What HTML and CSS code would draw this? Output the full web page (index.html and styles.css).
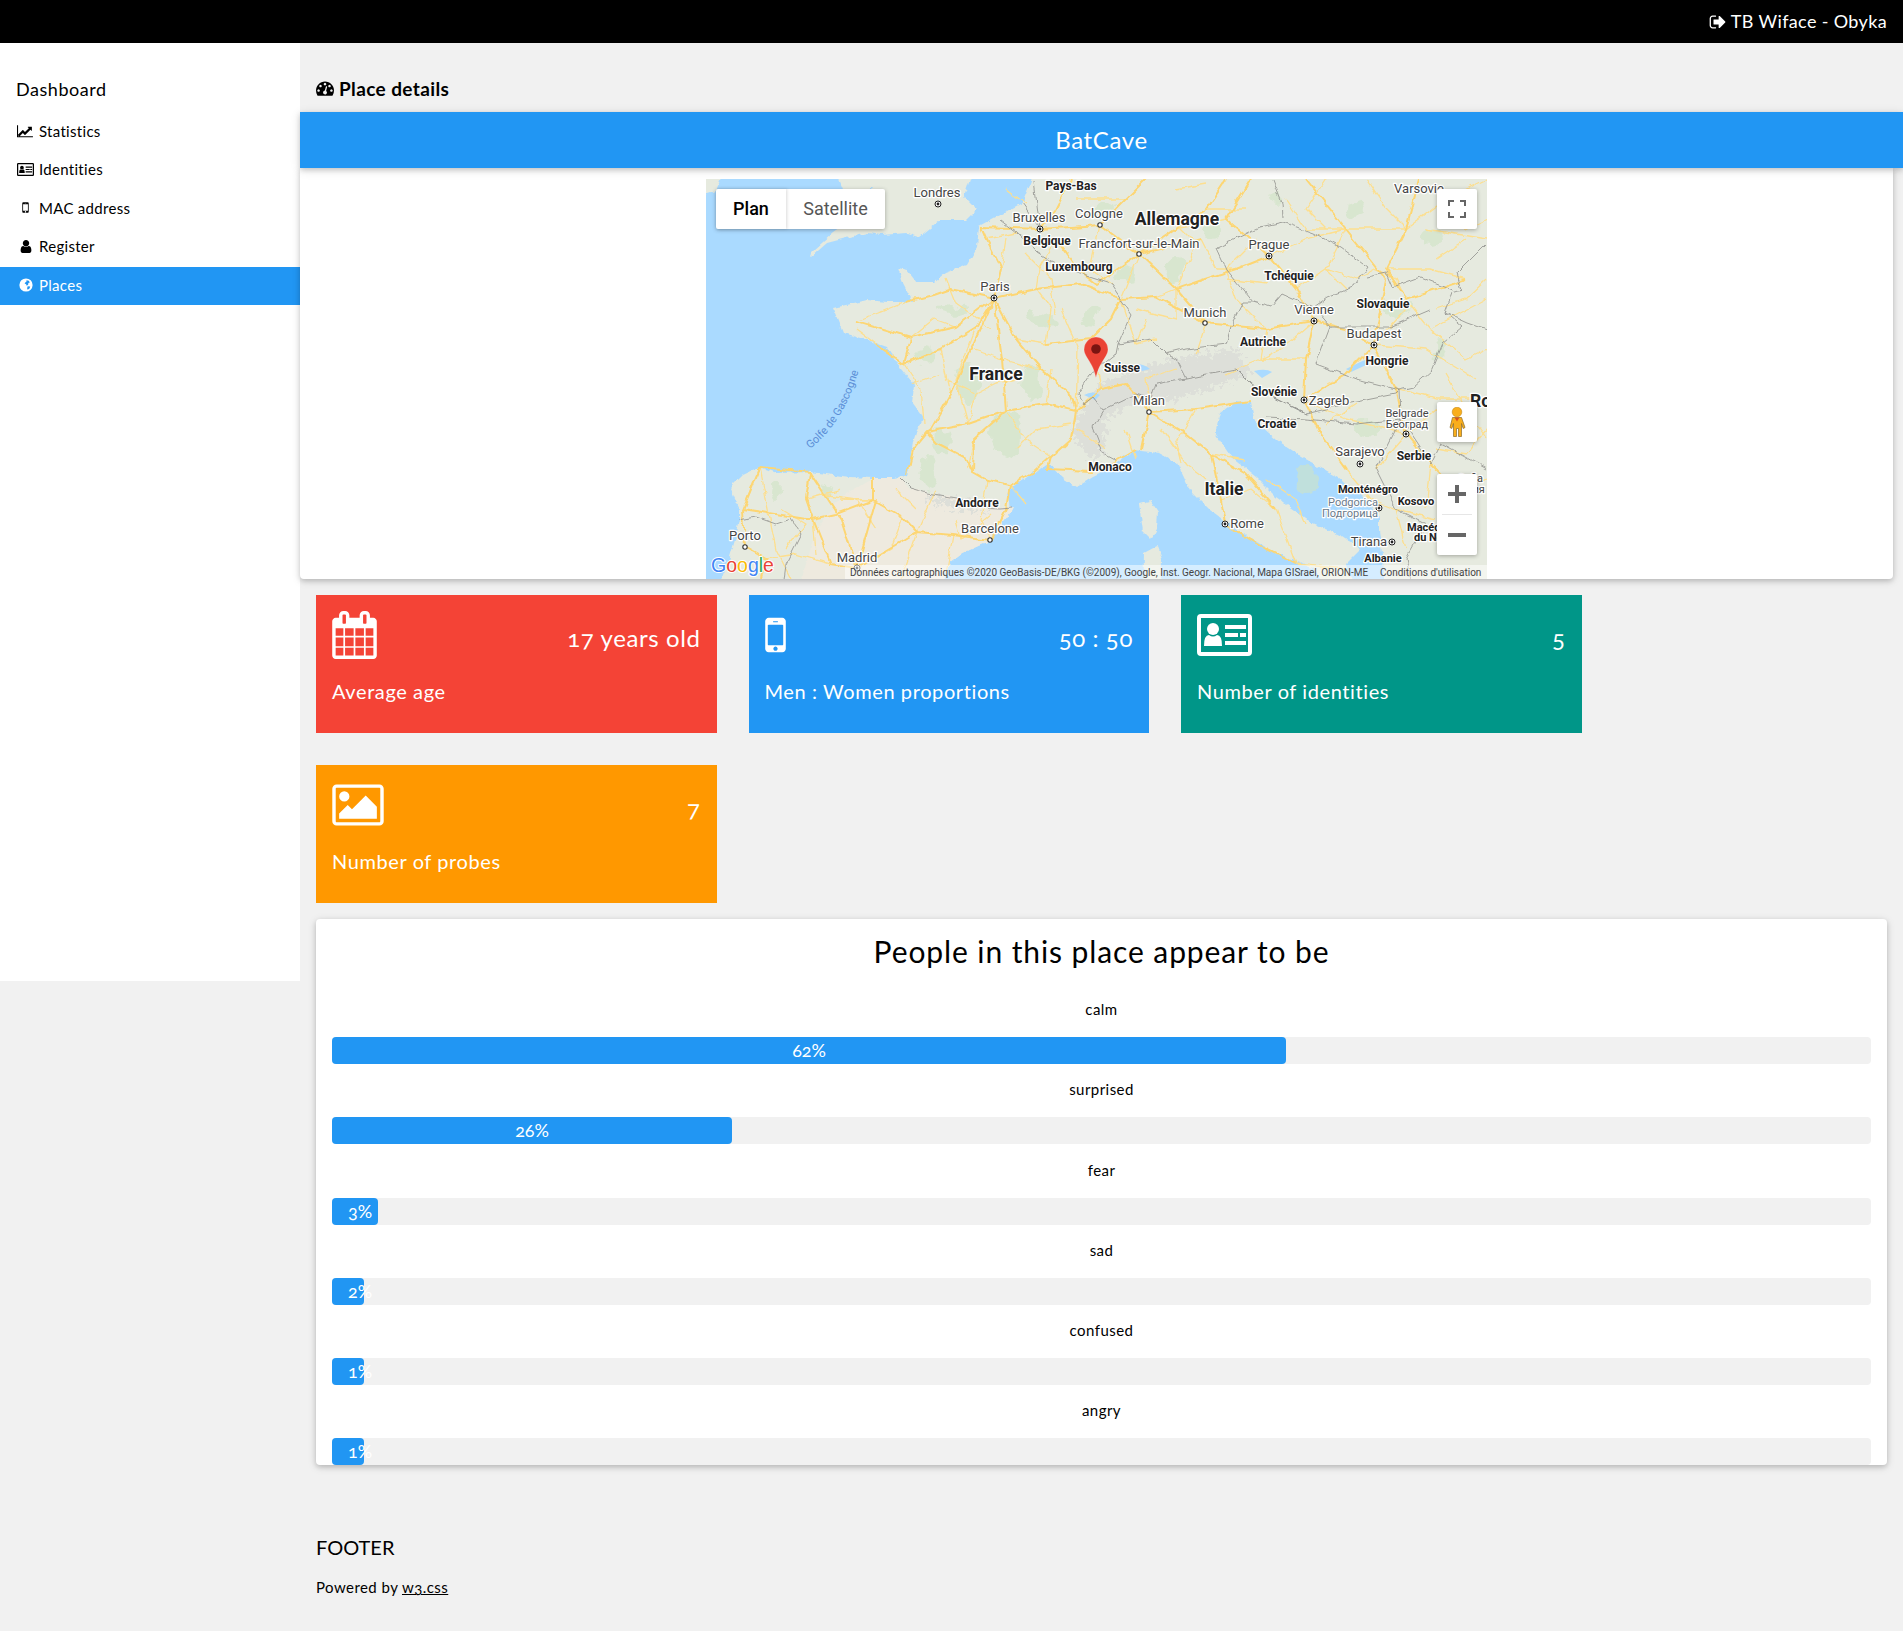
FILE: index.html
```html
<!DOCTYPE html>
<html lang="en">
<head>
<meta charset="utf-8">
<title>Place details</title>
<link rel="stylesheet" href="styles.css">
</head>
<body>
<header class="topbar">
  <svg class="ico-signout" viewBox="0 0 1792 1792"><path d="M704 1440q0 4 1 20t.5 26.5-3 23.5-10 19.5-20.5 6.5h-320q-119 0-203.5-84.5t-84.5-203.5v-704q0-119 84.5-203.5t203.5-84.5h320q13 0 22.5 9.5t9.5 22.5q0 4 1 20t.5 26.5-3 23.5-10 19.5-20.5 6.5h-320q-66 0-113 47t-47 113v704q0 66 47 113t113 47h312l11.5 1 11.5 3 8 5.5 7 9 2 13.5zm928-544q0 26-19 45l-544 544q-19 19-45 19t-45-19-19-45v-288h-448q-26 0-45-19t-19-45v-384q0-26 19-45t45-19h448v-288q0-26 19-45t45-19 45 19l544 544q19 19 19 45z"/></svg>
  <span class="topbar-text">TB Wiface - Obyka</span>
</header>
<div class="layout">
  <nav class="sidebar">
    <div class="side-title">Dashboard</div>
    <a class="side-item"><span class="side-ico"><svg width="17" height="15" viewBox="0 0 2048 1792"><path d="M1920 1472v128h-1920v-1472h128v1344h1792zm-128-1120v435q0 21-19.5 29.5t-35.5-7.5l-121-121-633 633q-10 10-23 10t-23-10l-233-233-416 416-192-192 585-585q10-10 23-10t23 10l233 233 464-464-121-121q-16-16-7.5-35.5t29.5-19.5h435q14 0 23 9t9 23z"/></svg></span>Statistics</a>
    <a class="side-item"><span class="side-ico"><svg width="17" height="15" viewBox="0 0 55 48"><path fill-rule="evenodd" d="M4 3h47a4 4 0 0 1 4 4v34a4 4 0 0 1-4 4H4a4 4 0 0 1-4-4V7a4 4 0 0 1 4-4zm0 4v34h47V7z"/><circle cx="16" cy="18" r="6"/><path d="M7 35q0-11 5-11 4 3 8 0 5 0 5 11z"/><path d="M28 14h21v4H28zM28 22h13v4H28zM43 22h6v4h-6zM28 30h21v4H28z"/></svg></span>Identities</a>
    <a class="side-item"><span class="side-ico"><svg width="7" height="15" viewBox="512 0 768 1792"><path d="M976 1408q0-33-23.5-56.5t-56.5-23.5-56.5 23.5-23.5 56.5 23.5 56.5 56.5 23.5 56.5-23.5 23.5-56.5zm208-160v-704q0-13-9.5-22.5t-22.5-9.5h-512q-13 0-22.5 9.5t-9.5 22.5v704q0 13 9.5 22.5t22.5 9.5h512q13 0 22.5-9.5t9.5-22.5zm-192-848q0-16-16-16h-160q-16 0-16 16t16 16h160q16 0 16-16zm288-16v1024q0 52-38 90t-90 38h-512q-52 0-90-38t-38-90v-1024q0-52 38-90t90-38h512q52 0 90 38t38 90z"/></svg></span>MAC address</a>
    <a class="side-item"><span class="side-ico"><svg width="12" height="15" viewBox="256 0 1280 1792"><path d="M1536 1399q0 109-62.5 187t-150.5 78h-854q-88 0-150.5-78t-62.5-187q0-85 8.5-160.5t31.5-152 58.5-131 94-89 134.5-34.5q131 128 313 128t313-128q76 0 134.5 34.5t94 89 58.5 131 31.5 152 8.5 160.5zm-256-887q0 159-112.5 271.5t-271.5 112.5-271.5-112.5-112.5-271.5 112.5-271.5 271.5-112.5 271.5 112.5 112.5 271.5z"/></svg></span>Register</a>
    <a class="side-item side-active"><span class="side-ico"><svg width="14" height="14" viewBox="0 0 14 14"><circle cx="7" cy="7" r="6.6" fill="#fff"/><path fill="#2196F3" d="M7.5 2.2l2.3.6 1 1.6-1.4.7-.3 1.700-1.400.9-.6-1.400-1.500-.9.9-1.100.9-.6zM8.700 8.200l2.500.4-.7 2-1.900 1.200-.5-1.600z"/></svg></span>Places</a>
  </nav>
  <main class="content">
    <h1 class="page-title"><svg class="ico-dash" viewBox="0 0 1792 1792"><path d="M384 1152q0-53-37.5-90.5t-90.5-37.5-90.5 37.5-37.5 90.5 37.5 90.5 90.5 37.5 90.5-37.5 37.5-90.5zm192-448q0-53-37.5-90.5t-90.5-37.5-90.5 37.5-37.5 90.5 37.5 90.5 90.5 37.5 90.5-37.5 37.5-90.5zm428 481l101-382q6-26-7.5-48.5t-38.5-29.5-48 6.5-30 39.5l-101 382q-60 5-107 43.5t-63 98.5q-20 77 20 146t117 89 146-20 89-117q16-60-6-117t-72-91zm660-33q0-53-37.5-90.5t-90.5-37.5-90.5 37.5-37.5 90.5 37.5 90.5 90.5 37.5 90.5-37.5 37.5-90.5zm-640-640q0-53-37.5-90.5t-90.5-37.5-90.5 37.5-37.5 90.5 37.5 90.5 90.5 37.5 90.5-37.5 37.5-90.5zm448 192q0-53-37.5-90.5t-90.5-37.5-90.5 37.5-37.5 90.5 37.5 90.5 90.5 37.5 90.5-37.5 37.5-90.5zm320 448q0 261-141 483-19 29-54 29h-1402q-35 0-54-29-141-221-141-483 0-182 71-348t191-286 286-191 348-71 348 71 286 191 191 286 71 348z"/></svg>Place details</h1>
    <div class="place-bar">BatCave</div>
    <section class="map-card">
      <div class="map">
        <svg class="map-svg" viewBox="0 0 781 400" width="781" height="400">
          <defs>
            <filter id="wig" filterUnits="userSpaceOnUse" x="-30" y="-30" width="841" height="460">
              <feTurbulence type="fractalNoise" baseFrequency=".09" numOctaves="2" seed="4" result="n"/>
              <feDisplacementMap in="SourceGraphic" in2="n" scale="6" xChannelSelector="R" yChannelSelector="G"/>
            </filter>
            <filter id="coast" filterUnits="userSpaceOnUse" x="-30" y="-30" width="841" height="460">
              <feTurbulence type="fractalNoise" baseFrequency=".14" numOctaves="3" seed="9" result="n"/>
              <feDisplacementMap in="SourceGraphic" in2="n" scale="5" xChannelSelector="R" yChannelSelector="G"/>
            </filter>
            <filter id="blob" filterUnits="userSpaceOnUse" x="-30" y="-30" width="841" height="460">
              <feTurbulence type="fractalNoise" baseFrequency=".07" numOctaves="3" seed="2" result="n"/>
              <feDisplacementMap in="SourceGraphic" in2="n" scale="18" xChannelSelector="R" yChannelSelector="G"/>
              <feGaussianBlur stdDeviation=".6"/>
            </filter>
            <filter id="rock" filterUnits="userSpaceOnUse" x="-30" y="-30" width="841" height="460">
              <feTurbulence type="fractalNoise" baseFrequency=".22" numOctaves="3" seed="7" result="n"/>
              <feDisplacementMap in="SourceGraphic" in2="n" scale="22" xChannelSelector="R" yChannelSelector="G"/>
              <feGaussianBlur stdDeviation=".5"/>
            </filter>
            <g id="cd"><circle r="3" fill="#fff" stroke="#222" stroke-width="1"/><circle r="1.400" fill="#222"/></g>
            <path id="gascogne" d="M104 270Q134 246 148 206T152 180"/>
          </defs>
          <rect width="781" height="400" fill="#aadaff"/>
          <!-- land -->
          <g filter="url(#coast)">
            <path class="land" d="M-20 -20L22 -20L10 12L-20 22ZM124 -20L137 11L150 18L167 8L161 31L127 54L106 73L105 78L121 64L144 58L161 54L176 56L201 54L213 58L234 41L261 41L271 31L258 18L271 -20Z"/>
            <path class="land" d="M334 -20L316 25L273 48L271 68L261 86L239 94L227 104L211 104L201 91L192 89L197 104L207 123L181 123L161 121L141 126L127 129L131 139L137 154L161 161L181 168L191 184L207 204L208 208L206 224L218 240L211 250L207 262L204 288L201 296L181 301L167 299L144 298L104 293L71 294L54 288L37 296L24 309L34 331L34 341L31 354L24 378L10 420L228 420L244 384L257 374L281 363L290 352L304 334L302 311L317 301L341 284L357 299L371 308L387 298L402 291L428 271L453 274L471 284L484 311L504 331L535 354L570 374L606 388L628 420L652 420L640 385L655 370L637 358L606 344L570 318L550 298L525 278L509 254L514 234L530 222L545 224L548 241L571 261L596 278L632 298L657 318L673 338L673 352L678 391L678 420L810 420L810 -20Z"/>
            <path class="land-es" d="M194 299L204 309L221 314L251 319L271 328L294 329L307 328L304 334L290 352L281 363L257 374L244 384L228 420L90 420L110 350L135 318L167 299Z"/>
            <path class="land" d="M433 325L445 322L452 333L451 350L445 360L437 352ZM438 374L451 367L456 380L455 420L437 420Z"/>
          </g>
          <!-- vegetation -->
          <g class="green" filter="url(#blob)">
            <ellipse cx="246" cy="130" rx="14" ry="6"/><ellipse cx="262" cy="205" rx="11" ry="20"/><ellipse cx="300" cy="255" rx="16" ry="24"/><ellipse cx="326" cy="205" rx="9" ry="17"/><ellipse cx="222" cy="295" rx="9" ry="15"/><ellipse cx="236" cy="262" rx="8" ry="16"/>
            <ellipse cx="218" cy="178" rx="10" ry="7"/><ellipse cx="335" cy="140" rx="13" ry="8"/><ellipse cx="384" cy="136" rx="10" ry="9"/><ellipse cx="420" cy="95" rx="12" ry="8"/><ellipse cx="470" cy="90" rx="10" ry="12"/>
            <ellipse cx="505" cy="50" rx="12" ry="8"/><ellipse cx="570" cy="20" rx="10" ry="7"/><ellipse cx="650" cy="30" rx="8" ry="8"/><ellipse cx="690" cy="130" rx="14" ry="6"/><ellipse cx="725" cy="60" rx="11" ry="6"/><ellipse cx="735" cy="170" rx="6" ry="8"/><ellipse cx="400" cy="30" rx="12" ry="8"/>
            <ellipse cx="120" cy="310" rx="8" ry="4"/><ellipse cx="70" cy="312" rx="5" ry="8"/><ellipse cx="600" cy="300" rx="12" ry="14"/><ellipse cx="660" cy="250" rx="14" ry="9"/>
          </g>
          <g filter="url(#rock)">
            <path class="alps" d="M375 230L395 205L430 190L480 178L530 170L545 195L510 208L465 222L425 225L400 240L398 275L385 280L365 255Z"/>
            <path class="alps" d="M221 316L262 322L282 334L252 330L228 326Z"/>
          </g>
          <path class="water" d="M548 192q12-3 18 1l-10 6zM430 185q8 0 14 5l-8 2zM378 216q9-5 16 0l-5 5zM640 190q18-9 26-12l-6 8-15 7z"/>
          <!-- roads -->
          <g filter="url(#wig)">
          <path class="road-thin" d="M150 142L175 133L200 123M205 158L228 140L250 148M198 185L215 210L218 245M170 165L150 150M235 170L245 215M262 245L250 200L270 148M296 180L330 190L335 190M310 160L340 165M340 165L345 130L330 110M265 170L296 180M268 260L262 290M300 232L320 262L345 278M340 225L345 190M371 250L400 270M395 210L385 160M350 60L333 90L330 110M300 60L295 90M280 60L311 54M394 46L384 90L405 105M433 75L415 120M470 110L450 118M495 60L510 90L530 90M470 50L520 40L563 77M500 30L540 30M590 110L620 90L650 100L668 90L690 100L700 120M640 50L620 90M580 20L600 50L640 50L700 50M680 90L724 90L760 100M700 120L724 150L760 180L781 170M724 150L781 120M700 50L740 20L781 0M720 50L781 60M668 166L700 130M668 166L720 170L770 200M690 210L730 220L781 220M700 255L730 230L770 240M750 310L781 300M640 290L665 320L690 330L700 370M690 330L730 340M725 285L720 330M670 290L700 255M560 150L555 180L520 195M608 142L575 170L555 180M555 180L600 180M640 195L620 205M598 221L640 240L700 255M490 230L470 265L475 285M505 275L540 280M515 320L545 310L570 330M570 330L590 385M445 232L440 200L470 190M415 120L430 165M500 144L490 175M520 100L560 105M563 77L600 60L640 50M167 321L135 320M197 338L185 370L151 389M247 356L240 395M211 353L230 310M125 385L90 375L60 380M60 320L70 370L85 400M107 340L110 375M211 353L195 400M281 301L275 340L285 361M304 306L320 325M100 320L135 310M54 288L60 320M590 385L640 390M240 100L250 125L285 150M320 75L345 100L350 135M355 130L372 170L370 232M240 200L270 215L262 245M205 205L235 195M310 200L290 205L270 215M310 270L330 250L365 245M430 130L470 140L470 110M460 35L490 65L470 110M530 120L520 90L550 60M530 120L560 150M620 50L600 30L620 0M660 0L680 30L700 50M740 20L760 50L781 40M730 80L760 60M730 130L760 120L781 100M640 110L620 90M740 195L760 230L781 260M730 270L760 275L781 250M620 245L650 225M560 300L590 320L600 345M420 250L430 280M455 250L480 285L500 300M370 20L395 20L420 20M300 10L320 25M470 10L500 5M440 140L430 165L450 160M170 350L150 320L115 315M75 330L100 345L80 370M190 310L210 330M250 340L255 360L285 335"/>
          <path class="road" d="M288 119L245 110L228 116L200 123M288 119L250 148L205 158L150 142M205 158L198 185L170 165M198 185L235 170L270 148L288 119M288 119L295 90L280 60L275 48M288 119L330 110L375 105L415 120M288 119L310 160L335 190L365 215L370 232M288 119L265 170L245 215L225 250L221 253M221 253L231 264L260 279L267 293L281 301L304 306L327 293L344 278M370 232L365 260L345 278L342 290M221 253L207 270L201 296M221 253L262 245L300 232L340 225L370 232M267 293L268 260L300 232L296 180L288 119M342 290L385 292L405 285L430 270M370 232L395 210L420 205L445 232M340 165L385 160L405 140L415 120M275 48L334 50L350 30L365 0M334 50L394 46L433 75L495 60M373 92L350 60M373 92L390 105L433 75M433 75L470 110L499 144M415 120L450 118L499 144L560 150L608 142M394 46L420 20L440 0M433 75L470 50L500 30L520 0M563 77L530 90L499 100L470 110M563 77L520 40L545 0M563 77L590 110L608 142M608 142L640 150L668 166M668 166L640 195L598 221M668 166L690 210L700 255M608 142L600 180L598 221M598 221L615 255L640 290M700 255L725 285L750 310M443 233L490 230L545 222M443 233L480 255L505 275L515 320L519 345M443 233L435 270M519 345L560 370L590 385M505 275L540 295L570 330M713 0L700 50L680 90L700 120L760 100M600 0L640 50L680 100L668 166M151 389L170 321M151 389L135 340L104 293M167 321L197 338L211 353L247 356L285 361M285 361L300 330L304 306M104 293L100 320L107 340L125 385L151 389M104 293L54 288M54 288L37 330L39 368M37 330L100 340L107 340M167 299L167 321L130 335L107 340M39 368L60 380L55 400M211 353L151 389"/>
          <path class="border" d="M194 299L204 309L221 314L251 319L271 328L294 329L307 328M294 41L311 54L331 73L344 81L371 94L405 105L425 135L412 165L410 175L385 195L372 215L378 225L387 218L397 231L387 248L397 274L410 281M412 165L445 160L460 175M397 231L430 215L445 220L450 205L480 200L470 180L460 175L480 170L520 165L526 144L537 123L547 123M511 69L521 91L547 123L564 128L576 114L607 128L621 118L647 108L661 88L634 68L607 54L577 43L554 48L511 69M577 38L576 24L567 1M661 98L681 94L687 108L714 98L747 111M624 148L684 148L724 131M781 64L751 94L756 111L746 114L739 134L756 148L737 164L726 191L707 208L694 211M739 134L761 144L781 151M480 200L530 190L545 205L560 215L600 235L640 225L690 215L694 211M624 148L607 128M624 148L610 185L650 200L694 211M560 238L600 240L650 245L695 240L670 290L690 330M694 211L695 240L725 285L735 265L781 290M690 330L720 345L700 380L705 401M34 341L50 338L70 345L85 340L95 355L80 385L78 401M316 25L334 50L328 2M600 235L560 215"/>
          </g>
          <!-- labels -->
          <use href="#cd" x="232" y="25"/><use href="#cd" x="288" y="119"/><use href="#cd" x="334" y="50"/><use href="#cd" x="563" y="77"/><use href="#cd" x="608" y="142"/><use href="#cd" x="668" y="166"/><use href="#cd" x="598" y="221"/><use href="#cd" x="700" y="255"/><use href="#cd" x="654" y="285"/><use href="#cd" x="519" y="345"/><use href="#cd" x="686" y="363"/><use href="#cd" x="673" y="329"/><use href="#cd" x="151" y="389"/>
          <circle class="odot" cx="394" cy="46" r="2.200"/><circle class="odot" cx="433" cy="75" r="2.200"/><circle class="odot" cx="499" cy="144" r="2.200"/><circle class="odot" cx="443" cy="233" r="2.200"/><circle class="odot" cx="284" cy="361" r="2.200"/><circle class="odot" cx="39" cy="368" r="2.200"/>
          <text class="city" x="231" y="18">Londres</text>
          <text class="ctry" x="365" y="11">Pays-Bas</text>
          <text class="city" x="333" y="43">Bruxelles</text>
          <text class="city" x="393" y="39">Cologne</text>
          <text class="big" x="471" y="46">Allemagne</text>
          <text class="ctry" x="341" y="66">Belgique</text>
          <text class="city" x="433" y="69">Francfort-sur-le-Main</text>
          <text class="city" x="563" y="70">Prague</text>
          <text class="ctry" x="373" y="92">Luxembourg</text>
          <text class="ctry" x="583" y="101">Tchéquie</text>
          <text class="city" x="289" y="112">Paris</text>
          <text class="ctry" x="677" y="129">Slovaquie</text>
          <text class="city" x="499" y="138">Munich</text>
          <text class="city" x="608" y="135">Vienne</text>
          <text class="city" x="668" y="159">Budapest</text>
          <text class="ctry" x="557" y="167">Autriche</text>
          <text class="ctry" x="681" y="186">Hongrie</text>
          <text class="big" x="290" y="201">France</text>
          <text class="ctry" x="416" y="193">Suisse</text>
          <text class="ctry" x="568" y="217">Slovénie</text>
          <text class="city" x="623" y="226">Zagreb</text>
          <text class="city" x="443" y="226">Milan</text>
          <text class="ctry" x="571" y="249">Croatie</text>
          <text class="city city-sm" x="701" y="238">Belgrade</text>
          <text class="city city-sm" x="701" y="249">Београд</text>
          <text class="city" x="654" y="277">Sarajevo</text>
          <text class="ctry" x="708" y="281">Serbie</text>
          <text class="ctry" x="404" y="292">Monaco</text>
          <text class="big" x="518" y="316">Italie</text>
          <text class="ctry ctry-sm" x="662" y="314">Monténégro</text>
          <text class="ctry ctry-sm" x="710" y="326">Kosovo</text>
          <text class="city city-dim" x="647" y="327">Podgorica</text>
          <text class="city city-dim" x="644" y="338">Подгорица</text>
          <text class="ctry" x="271" y="328">Andorre</text>
          <text class="city" x="541" y="349">Rome</text>
          <text class="city" x="284" y="354">Barcelone</text>
          <text class="city" x="663" y="367">Tirana</text>
          <text class="ctry ctry-sm" x="677" y="383">Albanie</text>
          <text class="ctry ctry-sm ctry-start" x="701" y="352">Macédoine</text>
          <text class="ctry ctry-sm ctry-start" x="708" y="362">du Nord</text>
          <text class="city" x="39" y="361">Porto</text>
          <text class="city" x="151" y="383">Madrid</text>
          <text class="city" x="713" y="14">Varsovie</text>
          <text class="big big-start" x="764" y="228">Roumanie</text>
          <text class="city city-sm ctry-start" x="752" y="303">Sofia</text>
          <text class="city city-sm ctry-start" x="745" y="314">София</text>
          <text class="sea"><textPath href="#gascogne">Golfe de Gascogne</textPath></text>
          <!-- marker -->
          <path d="M390 199C387 183 378 178 378 170.500A12 12.500 0 0 1 402 170.500C402 178 393 183 390 199Z" fill="#ea4335" stroke="#fff" stroke-opacity=".35" stroke-width=".8"/>
          <circle cx="390" cy="170" r="4.800" fill="#7a1411"/>
          <!-- attribution -->
          <rect class="attr-bg" x="139" y="386" width="642" height="14"/>
          <text class="attr" x="144" y="397">Données cartographiques ©2020 GeoBasis-DE/BKG (©2009), Google, Inst. Geogr. Nacional, Mapa GISrael, ORION-ME</text>
          <text class="attr" x="674" y="397">Conditions d'utilisation</text>
          <text class="google" x="5" y="393"><tspan class="g-b">G</tspan><tspan class="g-r">o</tspan><tspan class="g-y">o</tspan><tspan class="g-b">g</tspan><tspan class="g-g">l</tspan><tspan class="g-r">e</tspan></text>
        </svg>
        <div class="map-type"><span class="type-btn type-on">Plan</span><span class="type-btn type-off">Satellite</span></div>
        <div class="map-ctl ctl-full"><svg width="18" height="18" viewBox="0 0 18 18"><path d="M1 6V1h5M12 1h5v5M17 12v5h-5M6 17H1v-5" fill="none" stroke="#666" stroke-width="2"/></svg></div>
        <div class="map-ctl ctl-peg"><svg width="18" height="30" viewBox="0 0 18 30"><circle cx="9" cy="5" r="4.800" fill="#f9ae1c" stroke="#c48a1a" stroke-width=".6"/><path d="M4.500 10.500h9l3.500 10-1.800 1-1.700-5V29.500h-3v-8h-2v8h-3V16.500l-1.700 5-1.800-1z" fill="#f9ae1c" stroke="#8a6a2a" stroke-width=".7"/><path d="M6.500 10.500h5L9 14.500z" fill="#d9541e"/></svg></div>
        <div class="map-ctl ctl-zoom">
          <div class="zoom-btn"><svg width="18" height="18" viewBox="0 0 18 18"><path d="M7 0h4v7h7v4h-7v7H7v-7H0V7h7z" fill="#666"/></svg></div>
          <div class="zoom-sep"></div>
          <div class="zoom-btn"><svg width="18" height="18" viewBox="0 0 18 18"><path d="M0 7h18v4H0z" fill="#666"/></svg></div>
        </div>
      </div>
    </section>
    <section class="stats">
      <article class="stat stat-red">
        <div class="stat-top"><svg class="stat-ico" width="45" height="48" viewBox="64 0 1664 1792"><path d="M192 1664h288v-288h-288v288zm352 0h320v-288h-320v288zm-352-352h288v-320h-288v320zm352 0h320v-320h-320v320zm-352-384h288v-288h-288v288zm736 736h320v-288h-320v288zm-384-736h320v-288h-320v288zm768 736h288v-288h-288v288zm-384-352h320v-320h-320v320zm-352-864v-288q0-13-9.500-22.500t-22.500-9.500h-64q-13 0-22.500 9.500t-9.500 22.500v288q0 13 9.500 22.500t22.500 9.500h64q13 0 22.500-9.500t9.500-22.500zm736 864h288v-320h-288v320zm-384-384h320v-288h-320v288zm384 0h288v-288h-288v288zm32-480v-288q0-13-9.500-22.500t-22.500-9.500h-64q-13 0-22.500 9.500t-9.500 22.500v288q0 13 9.500 22.500t22.500 9.500h64q13 0 22.500-9.500t9.500-22.500zm384-64v1280q0 52-38 90t-90 38h-1408q-52 0-90-38t-38-90v-1280q0-52 38-90t90-38h128v-96q0-66 47-113t113-47h64q66 0 113 47t47 113v96h384v-96q0-66 47-113t113-47h64q66 0 113 47t47 113v96h128q52 0 90 38t38 90z"/></svg><span class="stat-val">17 years old</span></div>
        <div class="stat-label">Average age</div>
      </article>
      <article class="stat stat-blue">
        <div class="stat-top"><svg class="stat-ico" width="21" height="48" viewBox="512 0 768 1792"><path d="M976 1408q0-33-23.500-56.500t-56.500-23.500-56.500 23.500-23.500 56.500 23.500 56.500 56.500 23.500 56.500-23.500 23.500-56.500zm208-160v-704q0-13-9.500-22.500t-22.500-9.500h-512q-13 0-22.500 9.500t-9.500 22.500v704q0 13 9.500 22.500t22.500 9.500h512q13 0 22.500-9.500t9.500-22.500zm-192-848q0-16-16-16h-160q-16 0-16 16t16 16h160q16 0 16-16zm288-16v1024q0 52-38 90t-90 38h-512q-52 0-90-38t-38-90v-1024q0-52 38-90t90-38h512q52 0 90 38t38 90z"/></svg><span class="stat-val">50 : 50</span></div>
        <div class="stat-label">Men : Women proportions</div>
      </article>
      <article class="stat stat-teal">
        <div class="stat-top"><svg class="stat-ico" width="55" height="48" viewBox="0 0 55 48"><path fill-rule="evenodd" d="M4 3h47a4 4 0 0 1 4 4v34a4 4 0 0 1-4 4H4a4 4 0 0 1-4-4V7a4 4 0 0 1 4-4zm0 4v34h47V7z"/><circle cx="16" cy="18" r="6"/><path d="M7 35q0-11 5-11 4 3 8 0 5 0 5 11z"/><path d="M28 14h21v4H28zM28 22h13v4H28zM43 22h6v4h-6zM28 30h21v4H28z"/></svg><span class="stat-val">5</span></div>
        <div class="stat-label">Number of identities</div>
      </article>
      <article class="stat stat-orange">
        <div class="stat-top"><svg class="stat-ico" width="52" height="48" viewBox="-64 0 1920 1792"><path d="M576 576q0 80-56 136t-136 56-136-56-56-136 56-136 136-56 136 56 56 136zm1024 384v448h-1408v-192l320-320 160 160 512-512zm96-704h-1600q-13 0-22.500 9.500t-9.500 22.500v1216q0 13 9.500 22.500t22.500 9.500h1600q13 0 22.500-9.500t9.500-22.500v-1216q0-13-9.500-22.500t-22.500-9.500zm160 32v1216q0 66-47 113t-113 47h-1600q-66 0-113-47t-47-113v-1216q0-66 47-113t113-47h1600q66 0 113 47t47 113z"/></svg><span class="stat-val">7</span></div>
        <div class="stat-label">Number of probes</div>
      </article>
    </section>
    <section class="mood-card">
      <h2 class="mood-title">People in this place appear to be</h2>
      <div class="mood-label">calm</div>
      <div class="track"><div class="fill" style="width:62%">62%</div></div>
      <div class="mood-label">surprised</div>
      <div class="track"><div class="fill" style="width:26%">26%</div></div>
      <div class="mood-label">fear</div>
      <div class="track"><div class="fill fill-tiny" style="width:3%">3%</div></div>
      <div class="mood-label">sad</div>
      <div class="track"><div class="fill fill-tiny" style="width:2%">2%</div></div>
      <div class="mood-label">confused</div>
      <div class="track"><div class="fill fill-tiny" style="width:1%">1%</div></div>
      <div class="mood-label">angry</div>
      <div class="track"><div class="fill fill-tiny" style="width:1%">1%</div></div>
    </section>
    <footer class="foot">
      <div class="foot-title">FOOTER</div>
      <p class="foot-text">Powered by <a class="foot-link">w3.css</a></p>
    </footer>
  </main>
</div>
</body>
</html>
```
FILE: styles.css
```css
* { box-sizing: border-box; }
html, body { margin: 0; padding: 0; }
body {
  background: #f1f1f1;
  color: #000;
  font-family: "Lato", "Liberation Sans", sans-serif;
  font-size: 15px;
  line-height: 1.5;
  font-variant-numeric: oldstyle-nums;
}
.topbar {
  height: 43px;
  background: #000;
  color: #fff;
  display: flex;
  align-items: center;
  justify-content: flex-end;
  padding: 0 16px;
  font-size: 18px;
  letter-spacing: .02em;
}
.ico-signout { width: 18px; height: 18px; fill: #fff; margin-right: 4px; }
.layout { display: flex; align-items: flex-start; }
.sidebar { width: 300px; height: 938px; flex: none; background: #fff; }
.side-title { height: 70px; padding: 33px 16px 0; font-size: 18px; line-height: 27px; letter-spacing: .03em; }
.side-item { display: flex; align-items: center; height: 38.4px; padding: 0 16px 2px; color: #000; letter-spacing: .02em; }
.side-ico { width: 19px; margin-right: 4px; display: flex; justify-content: center; align-items: center; }
.side-active { background: #2196F3; color: #fff; }
.content { flex: 1; min-width: 0; }
.page-title {
  height: 69px;
  margin: 0;
  padding: 21px 16px 0;
  font-size: 19px;
  line-height: 27px;
  font-weight: 700;
  letter-spacing: .02em;
  display: flex;
  align-items: center;
}
.ico-dash { width: 18px; height: 18px; margin-right: 5px; }
.place-bar {
  height: 56px;
  background: #2196F3;
  color: #fff;
  font-size: 24px;
  line-height: 56px;
  letter-spacing: .025em;
  text-align: center;
  box-shadow: 0 2px 5px rgba(0,0,0,.16), 0 2px 10px rgba(0,0,0,.12);
  position: relative;
}
.map-card {
  margin-right: 10px;
  height: 411px;
  padding-top: 11px;
  background: #fff;
  border-radius: 0 0 4px 4px;
  box-shadow: 0 2px 5px rgba(0,0,0,.16), 0 2px 10px rgba(0,0,0,.12);
}
.map { width: 781px; height: 400px; margin: 0 auto; position: relative; overflow: hidden; font-family: "Roboto", sans-serif; }
.map-svg { display: block; font-family: "Roboto", sans-serif; font-variant-numeric: normal; }
.land { fill: #e6eadf; }
.land-es { fill: #eeeadf; }
.green { fill: #cfe4c5; opacity: .6; }
.alps { fill: #dddfd9; }
.water { fill: #aadaff; }
.road { fill: none; stroke: #fdd673; stroke-width: 2; stroke-linejoin: round; }
.road-thin { fill: none; stroke: #fddf8f; stroke-width: 1.3; stroke-linejoin: round; }
.border { fill: none; stroke: #8f8f8c; stroke-width: .8; }
.odot { fill: #fff; stroke: #333; stroke-width: 1.1; }
.city, .ctry, .big, .attr, .google { paint-order: stroke; stroke-linejoin: round; }
.city { font-size: 13px; fill: #444; text-anchor: middle; stroke: #fff; stroke-width: 2.5px; }
.city-sm { font-size: 11px; }
.city-dim { font-size: 11px; fill: #6a7a8a; }
.ctry { font-size: 12px; font-weight: 700; fill: #222; text-anchor: middle; stroke: #fff; stroke-width: 2.5px; }
.ctry-sm { font-size: 11px; }
.ctry-start { text-anchor: start; }
.big { font-size: 17.5px; font-weight: 700; fill: #222; text-anchor: middle; stroke: #fff; stroke-width: 2.5px; }
.big-start { text-anchor: start; }
.sea { font-size: 11px; fill: #5b8ed6; }
.attr-bg { fill: #fff; opacity: .5; }
.attr { font-size: 10px; fill: #444; }
.google { font-family: "Liberation Sans", sans-serif; font-size: 19.500px; stroke: #fff; stroke-width: 2px; }
.g-b { fill: #4285f4; } .g-r { fill: #ea4335; } .g-y { fill: #fbbc05; } .g-g { fill: #34a853; }
.map-type {
  position: absolute; left: 10px; top: 10px; height: 40px; display: flex;
  background: #fff; border-radius: 2px; box-shadow: 0 1px 4px rgba(0,0,0,.3);
  font-size: 18px; line-height: 40px;
}
.type-btn { display: block; text-align: center; }
.type-on { width: 70px; color: #000; font-weight: 500; box-shadow: 1px 0 3px rgba(0,0,0,.15); }
.type-off { width: 99px; color: #565656; }
.map-ctl {
  position: absolute; left: 731px; width: 40px; background: #fff; border-radius: 2px;
  box-shadow: 0 1px 4px rgba(0,0,0,.3);
  display: flex; align-items: center; justify-content: center;
}
.ctl-full { top: 10px; height: 40px; }
.ctl-peg { top: 223px; height: 40px; }
.ctl-zoom { top: 295px; height: 81px; flex-direction: column; }
.zoom-btn { width: 40px; height: 40px; display: flex; align-items: center; justify-content: center; }
.zoom-sep { width: 30px; height: 1px; background: #e6e6e6; }
.stats {
  display: grid;
  grid-template-columns: repeat(3, 400.5px);
  column-gap: 32px;
  row-gap: 32px;
  padding: 16px 16px 0;
}
.stat { height: 138px; padding: 16px; color: #fff; }
.stat-red { background: #f44336; }
.stat-blue { background: #2196F3; }
.stat-teal { background: #009688; }
.stat-orange { background: #ff9800; }
.stat-top { height: 48px; display: flex; justify-content: space-between; align-items: flex-start; }
.stat-ico { fill: #fff; flex: none; }
.stat-val { font-size: 24px; line-height: 36px; margin-top: 9px; letter-spacing: .025em; }
.stat-label { font-size: 20px; line-height: 30px; margin-top: 17px; letter-spacing: .03em; }
.mood-card {
  margin: 16px 16px 0;
  height: 546px;
  padding: 10px 16px 0;
  background: #fff;
  border-radius: 4px;
  box-shadow: 0 2px 5px rgba(0,0,0,.16), 0 2px 10px rgba(0,0,0,.12);
}
.mood-title { margin: 0 0 24px; font-size: 30px; line-height: 45px; font-weight: 400; text-align: center; letter-spacing: .03em; }
.mood-label { margin: 14.25px 0 16.5px; line-height: 22.5px; text-align: center; letter-spacing: .03em; }
.track { height: 27px; background: #f1f1f1; border-radius: 4px; }
.fill {
  height: 27px; padding: 0 16px; background: #2196F3; color: #fff; border-radius: 4px;
  font-size: 18px; line-height: 27px; text-align: center; white-space: nowrap;
}
.fill-tiny { min-width: 32px; text-align: left; }
.foot { padding: 67px 16px 0; height: 166px; }
.foot-title { font-size: 20px; line-height: 30px; }
.foot-text { margin: 14px 0 0; line-height: 22.5px; letter-spacing: .03em; }
.foot-link { text-decoration: underline; }
```
